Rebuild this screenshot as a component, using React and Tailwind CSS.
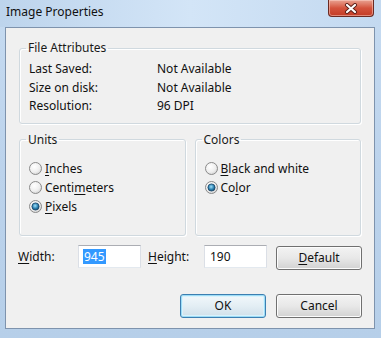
function Radio({ checked }) {
  return (
    <svg width="13" height="13" viewBox="0 0 13 13" className="shrink-0">
      <defs>
        <radialGradient id="rbg" cx="0.4" cy="0.35" r="0.75">
          <stop offset="0" stopColor="#ffffff" />
          <stop offset="0.6" stopColor="#eeeeee" />
          <stop offset="1" stopColor="#c9c9c9" />
        </radialGradient>
        <radialGradient id="rdot" cx="0.45" cy="0.4" r="0.7">
          <stop offset="0" stopColor="#9fe0fb" />
          <stop offset="0.55" stopColor="#2a7fae" />
          <stop offset="1" stopColor="#0d3858" />
        </radialGradient>
      </defs>
      <circle cx="6.5" cy="6.5" r="6" fill="url(#rbg)" stroke="#8a8a8a" strokeWidth="1" />
      {checked && <circle cx="6.5" cy="6.5" r="3.6" fill="url(#rdot)" stroke="#1b4466" strokeWidth="0.8" />}
    </svg>
  );
}

function RadioRow({ checked, children }) {
  return (
    <div className="h-[19px] flex items-center gap-[3px]">
      <Radio checked={checked} />
      <span className="leading-[19px]">{children}</span>
    </div>
  );
}

function Btn({ children, primary }) {
  return (
    <div
      className={
        "w-[86px] h-[24px] rounded-[3px] border flex items-center justify-center leading-none " +
        (primary
          ? "border-[#3c7fb1] bg-gradient-to-b from-[#f2f8fb] via-[#e3eef4] to-[#cfdfe9] shadow-[inset_0_0_0_1px_#9ddcf6,inset_0_0_0_2px_#d9f2fc]"
          : "border-[#707070] bg-gradient-to-b from-[#f3f3f3] via-[#e8e8e8] to-[#d2d2d2] shadow-[inset_0_0_0_1px_#fcfcfc]")
      }
    >
      {children}
    </div>
  );
}

function Group({ title, className, children }) {
  return (
    <fieldset
      className={
        "border border-[#d0d9df] rounded-[3px] px-[6px] shadow-[inset_1px_1px_0_#ffffff,1px_1px_0_#ffffff] " +
        (className || "")
      }
    >
      <legend className="px-[2px] leading-[16px] text-[#1a1a1a]">{title}</legend>
      {children}
    </fieldset>
  );
}

export default function App() {
  return (
    <div className="w-[381px] h-[338px] overflow-hidden flex flex-col bg-gradient-to-b from-[#c6dbf1] via-[#bcd3ec] to-[#b6cfe9] text-[12px] text-[#111] font-['Noto_Sans',sans-serif]">
      {/* title bar */}
      <div className="h-[27px] shrink-0 flex items-start justify-between pl-[6px] pr-[7px] bg-gradient-to-r from-[#bdd4ec] via-[#d3e5f7] to-[#c3d9f0]">
        <span className="mt-[4px] leading-[16px] text-[#111]">Image Properties</span>
        <div className="w-[46px] h-[17px] rounded-b-[4px] border border-t-0 border-[#6b2a22] bg-gradient-to-b from-[#e8a292] via-[#d4533d] to-[#c23b25] shadow-[inset_0_0_0_1px_rgba(255,215,205,0.5)] flex items-center justify-center">
          <svg width="14" height="11" viewBox="0 0 14 11">
            <path d="M3 2 L11 9 M11 2 L3 9" stroke="#5a1e17" strokeWidth="4" strokeLinecap="round" />
            <path d="M3 2 L11 9 M11 2 L3 9" stroke="#ffffff" strokeWidth="2.2" strokeLinecap="round" />
          </svg>
        </div>
      </div>

      {/* client */}
      <div className="ml-[5px] mr-[6px] h-[302px] shrink-0 bg-[#f0f0f0] border border-[#7e93ad] flex flex-col">
        <Group title="File Attributes" className="mx-[13px] mt-[12px] pb-[7px]">
          <div className="pl-[3px] pt-[4px] grid grid-cols-[128px_1fr] leading-[18.5px]">
            <span>Last Saved:</span>
            <span>Not Available</span>
            <span>Size on disk:</span>
            <span>Not Available</span>
            <span>Resolution:</span>
            <span>96 DPI</span>
          </div>
        </Group>

        <div className="mx-[13px] mt-[8px] flex gap-[9px]">
          <Group title="Units" className="flex-1 h-[104px]">
            <div className="pl-[3px] pt-[11px]">
              <RadioRow>
                <span className="underline underline-offset-2">I</span>nches
              </RadioRow>
              <RadioRow>
                Centi<span className="underline underline-offset-2">m</span>eters
              </RadioRow>
              <RadioRow checked>
                <span className="underline underline-offset-2">P</span>ixels
              </RadioRow>
            </div>
          </Group>
          <Group title="Colors" className="flex-1 h-[104px]">
            <div className="pl-[3px] pt-[11px]">
              <RadioRow>
                <span className="underline underline-offset-2">B</span>lack and white
              </RadioRow>
              <RadioRow checked>
                Co<span className="underline underline-offset-2">l</span>or
              </RadioRow>
            </div>
          </Group>
        </div>

        <div className="mt-[9px] ml-[12px] flex items-start">
          <span className="w-[60px] leading-[23px]">
            <span className="underline underline-offset-2">W</span>idth:
          </span>
          <div className="w-[63px] h-[23px] bg-white border border-[#dbdfe6] border-t-[#abadb3] border-b-[#e3e9ef] flex items-center pl-[4px]">
            <span className="bg-[#3399ff] text-white leading-[15px] px-[1px]">945</span>
          </div>
          <span className="ml-[7px] w-[56px] leading-[23px]">
            <span className="underline underline-offset-2">H</span>eight:
          </span>
          <div className="w-[63px] h-[23px] bg-white border border-[#dbdfe6] border-t-[#abadb3] border-b-[#e3e9ef] flex items-center pl-[5px]">
            <span className="leading-[15px]">190</span>
          </div>
          <div className="ml-[9px] mt-[1px]">
            <Btn>
              <span className="underline underline-offset-2">D</span>efault
            </Btn>
          </div>
        </div>

        <div className="mt-[24px] mr-[12px] flex justify-end gap-[10px]">
          <Btn primary>OK</Btn>
          <Btn>Cancel</Btn>
        </div>
      </div>
    </div>
  );
}
